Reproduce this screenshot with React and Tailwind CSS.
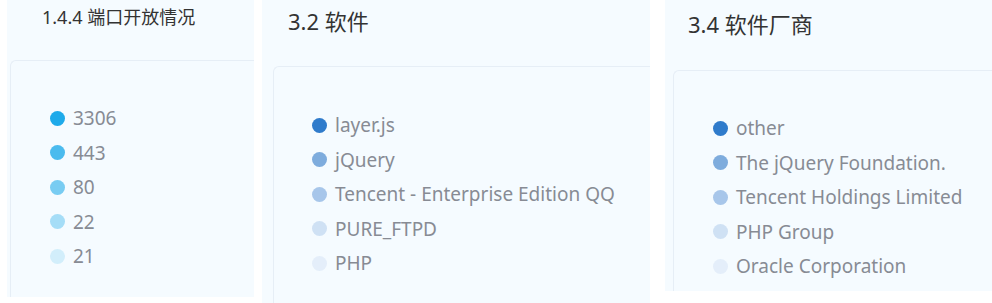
import React from "react";

const ports = [
  { name: "3306", color: "bg-[#1eaaea]" },
  { name: "443", color: "bg-[#4bbbee]" },
  { name: "80", color: "bg-[#78ccf2]" },
  { name: "22", color: "bg-[#a5ddf7]" },
  { name: "21", color: "bg-[#d2eefb]" },
];

const software = [
  { name: "layer.js", color: "bg-[#2f7bcb]" },
  { name: "jQuery", color: "bg-[#7eacdd]" },
  { name: "Tencent - Enterprise Edition QQ", color: "bg-[#a7c6ea]" },
  { name: "PURE_FTPD", color: "bg-[#cfe1f4]" },
  { name: "PHP", color: "bg-[#e4eefa]" },
];

const vendors = [
  { name: "other", color: "bg-[#2f7bcb]" },
  { name: "The jQuery Foundation.", color: "bg-[#7eacdd]" },
  { name: "Tencent Holdings Limited", color: "bg-[#a7c6ea]" },
  { name: "PHP Group", color: "bg-[#cfe1f4]" },
  { name: "Oracle Corporation", color: "bg-[#e4eefa]" },
];

const Legend = ({ items }) => (
  <ul className="flex flex-col">
    {items.map((item) => (
      <li key={item.name} className="flex items-center h-[34.5px]">
        <span className={`w-[15px] h-[15px] rounded-full shrink-0 ${item.color}`} />
        <span className="ml-[8px] text-[19px] text-[#878b94] whitespace-nowrap">
          {item.name}
        </span>
      </li>
    ))}
  </ul>
);

const App = () => {
  return (
    <div
      className="w-[992px] h-[303px] bg-white flex overflow-hidden"
      style={{ fontFamily: '"Noto Sans", "Noto Sans CJK SC", sans-serif' }}
    >
      {/* 1.4.4 */}
      <section className="ml-[7px] w-[247px] h-[297px] bg-[#f5fbff] flex flex-col">
        <h3 className="h-[60px] pl-[35px] pt-[5px] text-[18px] text-[#333] leading-[25px] whitespace-nowrap">
          1.4.4 端口开放情况
        </h3>
        <div className="ml-[3px] flex-1 border-l border-t border-[#e6eef6] rounded-tl-[6px] pl-[39px] pt-[40px]">
          <Legend items={ports} />
        </div>
      </section>

      {/* 3.2 */}
      <section className="ml-[8px] w-[388px] h-[303px] bg-[#f5fbff] flex flex-col">
        <h3 className="h-[66px] pl-[26px] pt-[6px] text-[22px] text-[#333] leading-[30px]">
          3.2 软件
        </h3>
        <div className="ml-[11px] flex-1 border-l border-t border-[#e6eef6] rounded-tl-[6px] pl-[38px] pt-[41px]">
          <Legend items={software} />
        </div>
      </section>

      {/* 3.4 */}
      <section className="ml-[15px] w-[327px] h-[291px] bg-[#f5fbff] flex flex-col">
        <h3 className="h-[70px] pl-[23px] pt-[9px] text-[22px] text-[#333] leading-[30px]">
          3.4 软件厂商
        </h3>
        <div className="ml-[8px] flex-1 border-l border-t border-[#e6eef6] rounded-tl-[6px] pl-[39px] pt-[40px]">
          <Legend items={vendors} />
        </div>
      </section>
    </div>
  );
};

export default App;
